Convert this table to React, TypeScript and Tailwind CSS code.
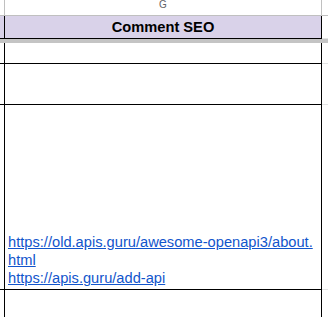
import React from "react";

const font = { fontFamily: '"Liberation Sans", Arial, sans-serif' };

function Row({
  height,
  children,
  last = false,
}: {
  height: string;
  children?: React.ReactNode;
  last?: boolean;
}) {
  const line = last ? "" : "border-b border-black";
  return (
    <div className={`flex w-full ${height}`}>
      <div className={`w-[4px] shrink-0 bg-white ${line}`} />
      <div className={`w-[318px] shrink-0 border-x border-black bg-white ${line}`}>{children}</div>
      <div className={`flex-1 bg-white ${last ? "" : "border-b border-[#e2e3e3]"}`} />
    </div>
  );
}

export default function App() {
  return (
    <div className="w-[328px] h-[317px] overflow-hidden bg-white" style={font}>
      {/* column letters */}
      <div className="flex h-[16px] border-b border-[#c0c0c0]">
        <div className="w-[4px] shrink-0" />
        <div className="w-[318px] shrink-0 border-x border-[#c0c0c0] flex justify-center">
          <span className="text-[10px] leading-[10px] text-[#5f6368]">G</span>
        </div>
        <div className="flex-1" />
      </div>

      {/* header row */}
      <div className="flex h-[23px]">
        <div className="w-[4px] shrink-0 bg-[#d9d2e9] border-b border-black" />
        <div className="w-[318px] shrink-0 bg-[#d9d2e9] border-x border-b border-black flex items-center justify-center">
          <span className="text-[14.67px] leading-[22px] font-bold text-black">Comment SEO</span>
        </div>
        <div className="flex-1 bg-white border-b border-[#e2e3e3]" />
      </div>

      {/* frozen divider */}
      <div className="h-[4px] bg-[#c4c4c4]" />

      <Row height="h-[21px]" />
      <Row height="h-[41px]" />
      <Row height="h-[185px]">
        <div className="h-full flex flex-col justify-end pl-[3px] pr-[2px] pb-[2px] text-[14.67px] leading-[18px]">
          <a href="#" className="text-[#1155cc] underline break-all">
            https://old.apis.guru/awesome-openapi3/about.html
          </a>
          <a href="#" className="text-[#1155cc] underline">
            https://apis.guru/add-api
          </a>
        </div>
      </Row>
      <Row height="h-[40px]" last />
    </div>
  );
}
